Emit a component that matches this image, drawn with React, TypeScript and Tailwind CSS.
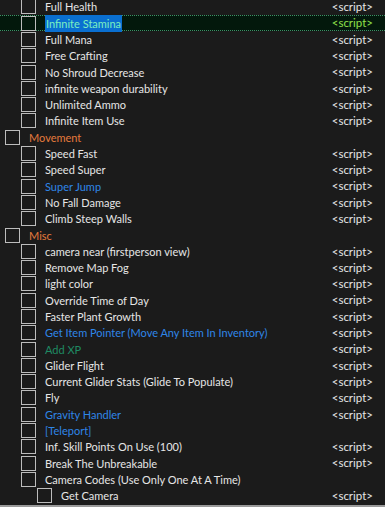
import React from "react";

type Row = {
  label: string;
  level: number;
  color?: string;
  script?: boolean;
  selected?: boolean;
};

const WHITE = "text-[#e6e6e6]";
const ORANGE = "text-[#e57a3c]";
const BLUE = "text-[#2f86e8]";
const TEAL = "text-[#1f8a63]";

const rows: Row[] = [
  { label: "Full Health", level: 1, script: true },
  { label: "Infinite Stamina", level: 1, script: true, selected: true },
  { label: "Full Mana", level: 1, script: true },
  { label: "Free Crafting", level: 1, script: true },
  { label: "No Shroud Decrease", level: 1, script: true },
  { label: "infinite weapon durability", level: 1, script: true },
  { label: "Unlimited Ammo", level: 1, script: true },
  { label: "Infinite Item Use", level: 1, script: true },
  { label: "Movement", level: 0, color: ORANGE },
  { label: "Speed Fast", level: 1, script: true },
  { label: "Speed Super", level: 1, script: true },
  { label: "Super Jump", level: 1, color: BLUE, script: true },
  { label: "No Fall Damage", level: 1, script: true },
  { label: "Climb Steep Walls", level: 1, script: true },
  { label: "Misc", level: 0, color: ORANGE },
  { label: "camera near (firstperson view)", level: 1, script: true },
  { label: "Remove Map Fog", level: 1, script: true },
  { label: "light color", level: 1, script: true },
  { label: "Override Time of Day", level: 1, script: true },
  { label: "Faster Plant Growth", level: 1, script: true },
  { label: "Get Item Pointer (Move Any Item In Inventory)", level: 1, color: BLUE, script: true },
  { label: "Add XP", level: 1, color: TEAL, script: true },
  { label: "Glider Flight", level: 1, script: true },
  { label: "Current Glider Stats (Glide To Populate)", level: 1, script: true },
  { label: "Fly", level: 1, script: true },
  { label: "Gravity Handler", level: 1, color: BLUE, script: true },
  { label: "[Teleport]", level: 1, color: BLUE },
  { label: "Inf. Skill Points On Use (100)", level: 1, script: true },
  { label: "Break The Unbreakable", level: 1, script: true },
  { label: "Camera Codes (Use Only One At A Time)", level: 1 },
  { label: "Get Camera", level: 2, script: true },
];

const indent = ["pl-[5px]", "pl-[21px]", "pl-[37px]"];

export default function App() {
  return (
    <div
      className="w-[385px] h-[507px] bg-[#1b1b1b] flex flex-col overflow-hidden"
      style={{ fontFamily: 'Lato, "Open Sans", sans-serif' }}
    >
      <div className="flex-1 overflow-hidden">
        <div className="-mt-[1.3px]">
          {rows.map((r, i) => (
            <div
              key={i}
              className={`h-[16.3px] flex items-center pr-[12px] ${indent[r.level]} ${
                r.selected
                  ? "bg-[#03180c] border-y border-dotted border-[#3f8f66]"
                  : ""
              }`}
            >
              <div className="w-[15px] h-[15px] border border-[#bdbdbd] shrink-0" />
              <div className="flex-1 pl-[9px] text-[11px] leading-none whitespace-nowrap">
                {r.selected ? (
                  <span className="bg-[#0a6fd0] text-[#7cf0c0] px-px py-[2px]">{r.label}</span>
                ) : (
                  <span className={r.color ?? WHITE}>{r.label}</span>
                )}
              </div>
              {r.script && (
                <span
                  className={`text-[11.5px] leading-none ${
                    r.selected ? "text-[#8fe04a]" : WHITE
                  }`}
                >
                  &lt;script&gt;
                </span>
              )}
            </div>
          ))}
        </div>
      </div>
      <div className="h-[2px] bg-[#9a9a9a] shrink-0" />
    </div>
  );
}
